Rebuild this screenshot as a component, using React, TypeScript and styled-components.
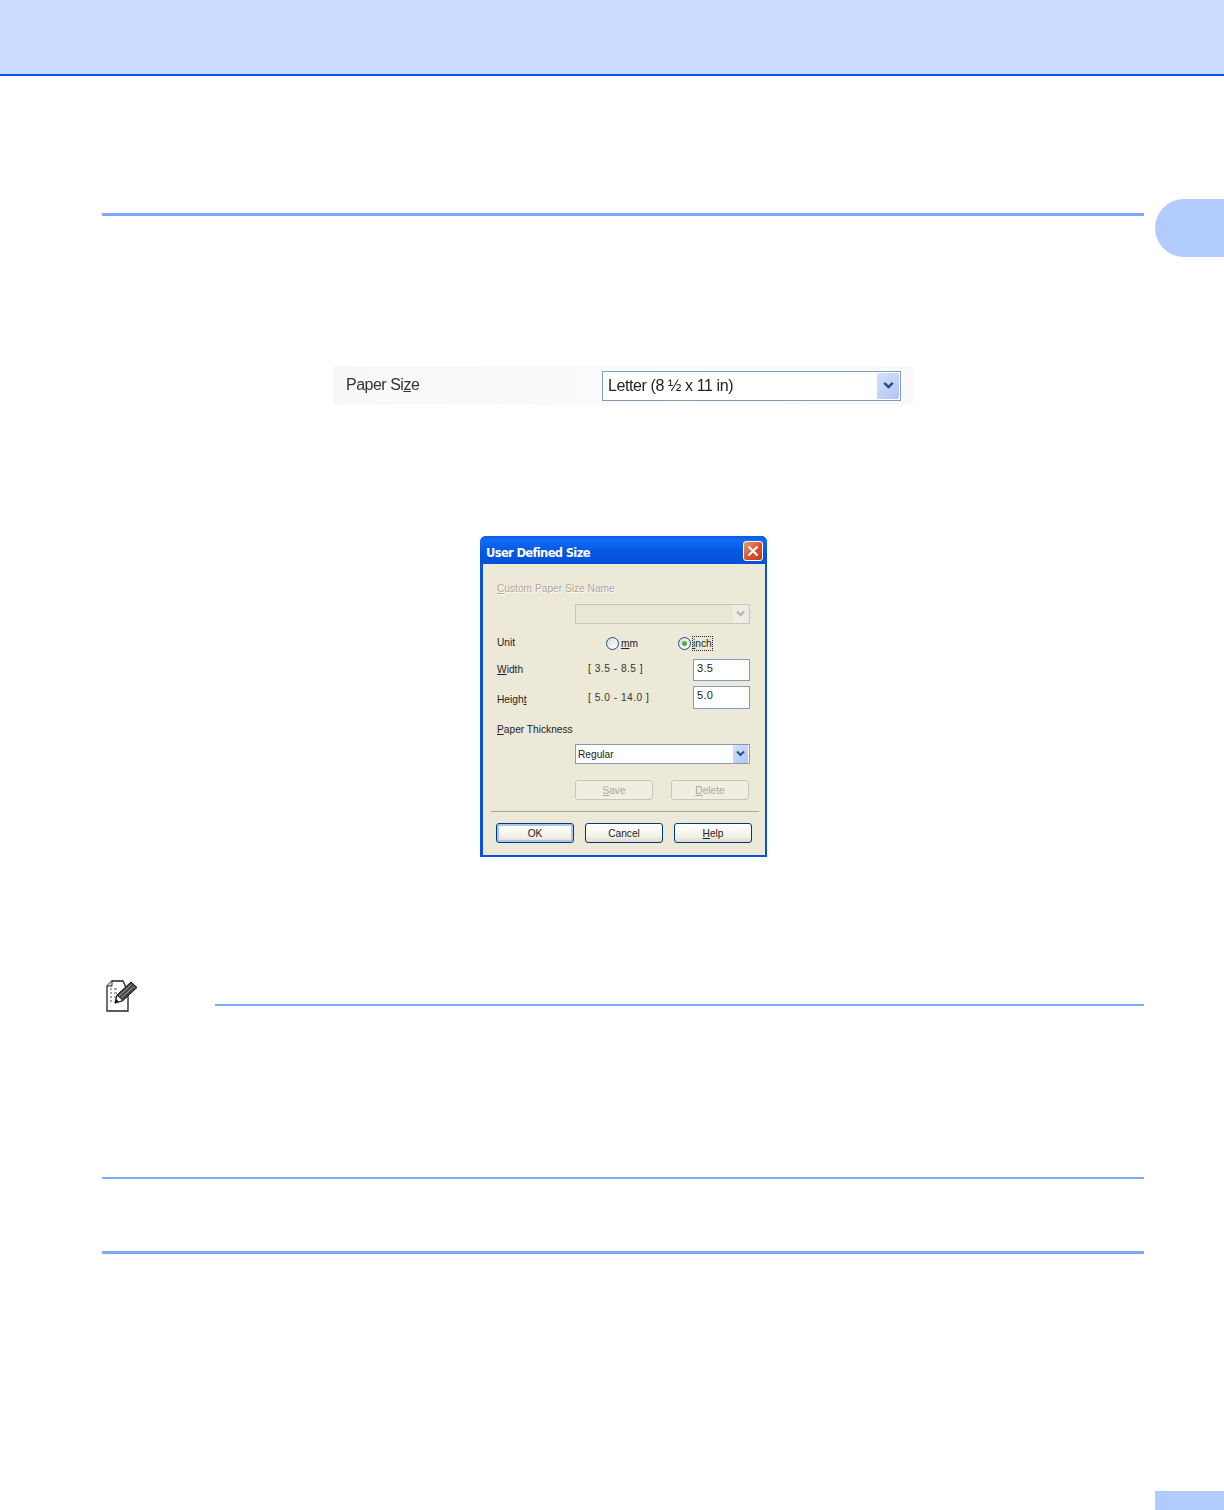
import React from 'react';
import styled, { createGlobalStyle } from 'styled-components';

const GlobalStyle = createGlobalStyle`
  html, body {
    margin: 0;
    padding: 0;
    background: #fff;
  }
  * {
    box-sizing: border-box;
  }
`;

const Chevron = ({ color, size = 9 }: { color: string; size?: number }) => (
  <svg width={size} height={size * 0.78} viewBox="0 0 9 7">
    <path d="M1 1.5 L4.5 5 L8 1.5" fill="none" stroke={color} strokeWidth="2" />
  </svg>
);

const NoteIcon = () => (
  <svg width="33" height="33" viewBox="0 0 33 33">
    <path d="M7 1 H18 L23 12 V31 H2 V6 Z" fill="#fff" stroke="#222" strokeWidth="1.3" />
    <path d="M2 6 L7 6 L7 1" fill="#ddd" stroke="#222" strokeWidth="1" />
    <path d="M5 9h2M9 9h3M5 13h2M9 13h3M5 17h2M9 17h2M5 21h2" stroke="#888" strokeWidth="1.5" />
    <path d="M10 23 L12 15 L26 2 L32 7.5 L18 20.5 Z" fill="#444" stroke="#111" strokeWidth="1" />
    <path d="M14 16 L26.5 4.5 M16 18 L29 6.5" stroke="#aaa" strokeWidth="1" />
    <path d="M10 23 L12 15 L18 20.5 Z" fill="#fff" stroke="#111" strokeWidth="1" />
    <path d="M10 23 L11 19 L13.5 21.3 Z" fill="#111" />
  </svg>
);

export default function App() {
  return (
    <Page>
      <GlobalStyle />
      <Header />
      <SideTab />
      <PageTab />
      <Content>
        <Rule $size={3} $top={137} />
        <Figure $top={150}>
          <PaperStrip>
            <PaperLabel>
              Paper Si<u>z</u>e
            </PaperLabel>
            <PaperCombo>
              <span>Letter (8 ½ x 11 in)</span>
              <PaperArrow>
                <Chevron color="#2c4a86" size={11} />
              </PaperArrow>
            </PaperCombo>
          </PaperStrip>
        </Figure>
        <Figure $top={131}>
          <Dialog>
            <TitleBar>
              <span>User Defined Size</span>
              <CloseButton>
                <svg width="12" height="12" viewBox="0 0 12 12">
                  <path d="M1.5 1.5 L10.5 10.5 M10.5 1.5 L1.5 10.5" stroke="#fff" strokeWidth="2.2" />
                </svg>
              </CloseButton>
            </TitleBar>
            <DialogBody>
              <DisabledLabel>
                <u>C</u>ustom Paper Size Name
              </DisabledLabel>
              <ComboRow $top={8}>
                <Combo $disabled>
                  <ComboArrow $disabled>
                    <Chevron color="#b5b2a6" />
                  </ComboArrow>
                </Combo>
              </ComboRow>
              <UnitRow>
                <Label>Unit</Label>
                <RadioGroup>
                  <Radio />
                  <RadioLabel>
                    <u>m</u>m
                  </RadioLabel>
                </RadioGroup>
                <RadioGroup>
                  <Radio $checked />
                  <RadioLabel $focused>
                    <u>i</u>nch
                  </RadioLabel>
                </RadioGroup>
              </UnitRow>
              <FieldRow $top={9} $height={22}>
                <Label>
                  <u>W</u>idth
                </Label>
                <Range $raise={4}>[ 3.5 - 8.5 ]</Range>
                <TextBox>3.5</TextBox>
              </FieldRow>
              <FieldRow $top={5} $height={23}>
                <Label $drop={4}>
                  Heigh<u>t</u>
                </Label>
                <Range>[ 5.0 - 14.0 ]</Range>
                <TextBox>5.0</TextBox>
              </FieldRow>
              <ThicknessLabel>
                <u>P</u>aper Thickness
              </ThicknessLabel>
              <ComboRow $top={7}>
                <Combo>
                  <span>Regular</span>
                  <ComboArrow>
                    <Chevron color="#2c4a86" />
                  </ComboArrow>
                </Combo>
              </ComboRow>
              <ActionRow>
                <DisabledButton>
                  <u>S</u>ave
                </DisabledButton>
                <DisabledButton>
                  <u>D</u>elete
                </DisabledButton>
              </ActionRow>
              <Separator />
              <FooterRow>
                <DialogButton $primary>OK</DialogButton>
                <DialogButton>Cancel</DialogButton>
                <DialogButton>
                  <u>H</u>elp
                </DialogButton>
              </FooterRow>
            </DialogBody>
          </Dialog>
        </Figure>
        <NoteRow>
          <NoteIcon />
          <NoteLine />
        </NoteRow>
        <Rule $size={2} $top={165} />
        <Rule $size={3} $top={72} />
      </Content>
    </Page>
  );
}

const Page = styled.div`
  position: relative;
  width: 1224px;
  height: 1510px;
  overflow: hidden;
  background: #fff;
  font-family: 'Liberation Sans', Arial, sans-serif;
`;

const Header = styled.header`
  height: 76px;
  background: #ccdcff;
  border-bottom: 2px solid #0055f0;
`;

const SideTab = styled.div`
  position: absolute;
  top: 199px;
  right: 0;
  width: 69px;
  height: 58px;
  background: #b3ccff;
  border-radius: 29px 0 0 29px;
`;

const PageTab = styled.div`
  position: absolute;
  right: 0;
  bottom: 0;
  width: 69px;
  height: 19px;
  background: #b3ccff;
`;

const Content = styled.main`
  width: 1042px;
  margin-left: 102px;
`;

const Rule = styled.div<{ $size: number; $top: number }>`
  height: ${(p) => p.$size}px;
  margin-top: ${(p) => p.$top}px;
  background: #80a8ff;
`;

const Figure = styled.div<{ $top: number }>`
  display: flex;
  justify-content: center;
  margin-top: ${(p) => p.$top}px;
`;

const PaperStrip = styled.div`
  display: flex;
  align-items: center;
  justify-content: space-between;
  width: 580px;
  height: 39px;
  padding: 0 12px 0 13px;
  background: linear-gradient(90deg, #f8f8f8, #fbfbfb 60%, #f9f9f9);
  filter: blur(0.35px);
`;

const PaperLabel = styled.span`
  font-size: 16px;
  letter-spacing: -0.5px;
  color: #333;
  margin-top: -2px;
`;

const PaperCombo = styled.div`
  display: flex;
  align-items: center;
  justify-content: space-between;
  width: 299px;
  height: 30px;
  padding: 0 1px 0 5px;
  background: #fff;
  border: 1px solid #7f9db9;
  font-size: 16px;
  letter-spacing: -0.4px;
  color: #222;
`;

const PaperArrow = styled.div`
  display: flex;
  align-items: center;
  justify-content: center;
  width: 22px;
  height: 26px;
  border-radius: 2px;
  background: linear-gradient(135deg, #d6e2fb, #aec4f4);
`;

const Dialog = styled.div`
  width: 287px;
  height: 321px;
  margin-left: 1px;
  border-radius: 6px 6px 0 0;
  background: #0a52dc;
  font-family: 'Liberation Sans', Tahoma, sans-serif;
  font-size: 10.2px;
  color: #222;
  display: flex;
  flex-direction: column;
  padding: 0 2px 2px 3px;
`;

const TitleBar = styled.div`
  display: flex;
  align-items: center;
  justify-content: space-between;
  height: 28px;
  margin: 0 -2px 0 -3px;
  padding: 2px 4px 0 6px;
  border-radius: 6px 6px 0 0;
  background: linear-gradient(180deg, #0a5ae6 0%, #0f6cf5 15%, #0457e4 55%, #0350d8 100%);
  color: #fff;
  font-family: 'DejaVu Sans', sans-serif;
  font-size: 11.5px;
  font-weight: 700;
  letter-spacing: -0.65px;

  span {
    margin-top: 3px;
  }
`;

const CloseButton = styled.div`
  display: flex;
  align-items: center;
  justify-content: center;
  width: 20px;
  height: 20px;
  border: 1px solid #fff;
  border-radius: 3px;
  background: linear-gradient(135deg, #e89a7a, #d9512c 55%, #c23a17);
`;

const DialogBody = styled.div`
  flex: 1;
  padding: 18px 0 0 14px;
  background: #ece9d8;
`;

const Label = styled.span<{ $drop?: number }>`
  line-height: 14px;
  margin-top: ${(p) => p.$drop ?? 0}px;
`;

const DisabledLabel = styled.div`
  height: 14px;
  line-height: 14px;
  color: #aca899;
  text-shadow: 1px 1px 0 #fff;
`;

const ComboRow = styled.div<{ $top: number }>`
  display: flex;
  padding-left: 78px;
  margin-top: ${(p) => p.$top}px;
`;

const Combo = styled.div<{ $disabled?: boolean }>`
  display: flex;
  align-items: center;
  justify-content: space-between;
  width: 175px;
  height: 20px;
  padding: 0 1px 0 2px;
  border: 1px solid ${(p) => (p.$disabled ? '#c9c7ba' : '#7f9db9')};
  background: ${(p) => (p.$disabled ? '#e9e6d6' : '#fff')};
`;

const ComboArrow = styled.div<{ $disabled?: boolean }>`
  display: flex;
  align-items: center;
  justify-content: center;
  width: 15px;
  height: 18px;
  margin-left: auto;
  border-radius: 1px;
  background: ${(p) =>
    p.$disabled ? '#eeede5' : 'linear-gradient(135deg, #d6e2fb, #aec4f4)'};
`;

const UnitRow = styled.div`
  display: grid;
  grid-template-columns: 109px 72px auto;
  align-items: center;
  height: 14px;
  margin-top: 12px;
`;

const RadioGroup = styled.div`
  display: flex;
  align-items: center;
  gap: 2px;
`;

const Radio = styled.span<{ $checked?: boolean }>`
  position: relative;
  width: 13px;
  height: 13px;
  border: 1px solid #1c5180;
  border-radius: 50%;
  background: linear-gradient(135deg, #dcdcd7, #fff);

  ${(p) =>
    p.$checked &&
    `&::after {
      content: '';
      position: absolute;
      top: 3px;
      left: 3px;
      width: 5px;
      height: 5px;
      border-radius: 50%;
      background: #3fb34a;
    }`}
`;

const RadioLabel = styled.span<{ $focused?: boolean }>`
  line-height: 13px;
  outline: ${(p) => (p.$focused ? '1px dotted #222' : 'none')};
`;

const FieldRow = styled.div<{ $top: number; $height: number }>`
  display: grid;
  grid-template-columns: 91px 105px 57px;
  align-items: center;
  height: ${(p) => p.$height}px;
  margin-top: ${(p) => p.$top}px;
`;

const Range = styled.span<{ $raise?: number }>`
  letter-spacing: 0.5px;
  color: #333;
  margin-bottom: ${(p) => p.$raise ?? 0}px;
`;

const TextBox = styled.div`
  height: 100%;
  padding: 1px 3px;
  line-height: 15px;
  font-size: 11px;
  letter-spacing: 0.3px;
  border: 1px solid #7f9db9;
  background: #fff;
`;

const ThicknessLabel = styled.div`
  height: 14px;
  line-height: 14px;
  margin-top: 14px;
`;

const ActionRow = styled.div`
  display: flex;
  gap: 18px;
  padding-left: 78px;
  margin-top: 16px;
`;

const DisabledButton = styled.div`
  display: flex;
  align-items: center;
  justify-content: center;
  width: 78px;
  height: 20px;
  border: 1px solid #c9c7ba;
  border-radius: 3px;
  color: #aca899;
  background: #f0eee2;
`;

const Separator = styled.div`
  height: 1px;
  margin: 11px 6px 0 -6px;
  background: #aca899;
`;

const FooterRow = styled.div`
  display: flex;
  gap: 11px;
  margin: 11px 0 0 -1px;
`;

const DialogButton = styled.div<{ $primary?: boolean }>`
  display: flex;
  align-items: center;
  justify-content: center;
  width: 78px;
  height: 20px;
  border: 1px solid #003c74;
  border-radius: 3px;
  background: linear-gradient(180deg, #fff, #f2f1e8 70%, #dcd8c8);
  box-shadow: ${(p) =>
    p.$primary ? 'inset 0 0 0 2px #a9c4ee' : 'none'};
`;

const NoteRow = styled.div`
  display: flex;
  align-items: flex-start;
  height: 32px;
  margin-top: 123px;
  padding-left: 3px;
`;

const NoteLine = styled.div`
  width: 929px;
  height: 2px;
  margin: 24px 0 0 77px;
  background: #80a8ff;
`;
